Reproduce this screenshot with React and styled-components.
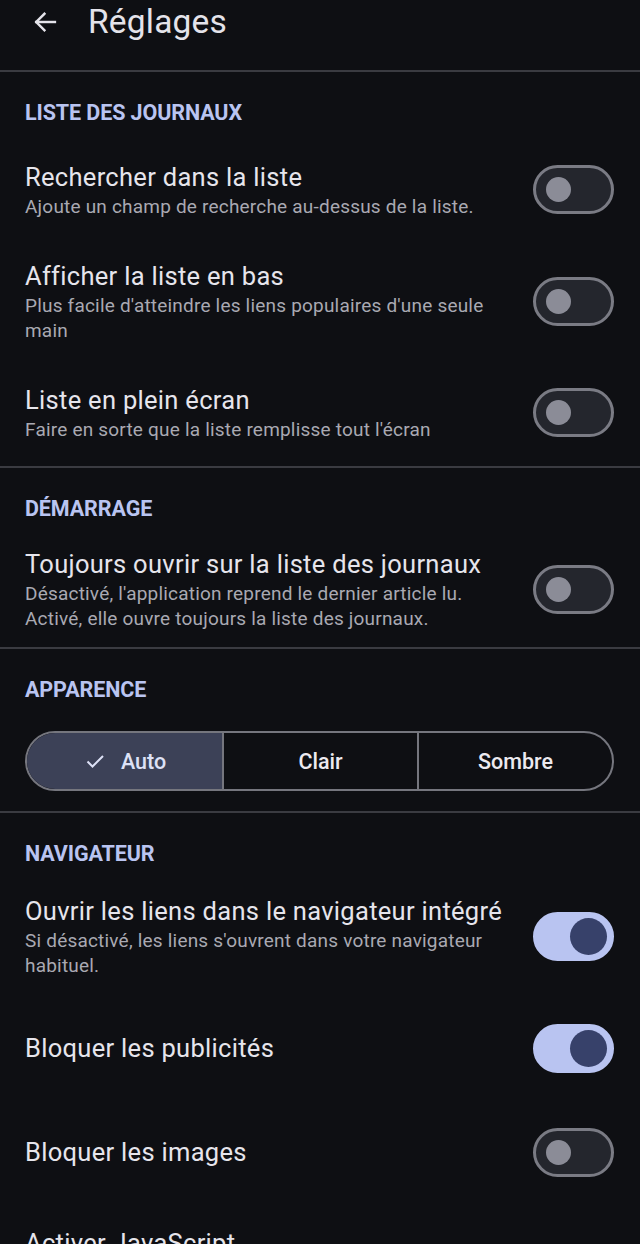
import React, { useState } from 'react';
import styled, { createGlobalStyle } from 'styled-components';

const GlobalStyle = createGlobalStyle`
  html, body {
    margin: 0;
    padding: 0;
    background: #0e0f13;
  }
  * {
    box-sizing: border-box;
  }
`;

const Page = styled.div`
  width: 640px;
  height: 1244px;
  overflow: hidden;
  background: #0e0f13;
  font-family: Roboto, 'Noto Sans', sans-serif;
  color: #e4e3ea;
`;

const TopBar = styled.header`
  display: flex;
  align-items: center;
  gap: 28px;
  height: 72px;
  padding: 0 0 27px 30px;
  border-bottom: 2px solid #3a3b41;
`;

const BackButton = styled.button`
  display: flex;
  align-items: center;
  justify-content: center;
  padding: 0;
  width: 30px;
  height: 30px;
  border: 0;
  background: transparent;
  color: #e4e3ea;
`;

const Title = styled.h1`
  margin: 0;
  font-size: 33.5px;
  font-weight: 400;
  letter-spacing: 0.2px;
`;

const Section = styled.section`
  border-bottom: ${p => (p.last ? '0' : '2px solid #3a3b41')};
  padding-bottom: ${p => p.pad || 0}px;
`;

const SectionHeader = styled.h2`
  margin: 0;
  padding: 29px 25px ${p => p.gap || 6}px;
  font-size: 21.5px;
  line-height: 24px;
  font-weight: 700;
  color: #b9c4f1;
  letter-spacing: -0.1px;
`;

const Row = styled.div`
  display: flex;
  align-items: center;
  gap: 16px;
  min-height: ${p => p.minH || 0}px;
  padding: 20px 26px ${p => p.pb ?? 20}px 25px;
`;

const Texts = styled.div`
  flex: 1;
  align-self: ${p => (p.top ? 'flex-start' : 'auto')};
  display: flex;
  flex-direction: column;
`;

const RowTitle = styled.div`
  font-size: 25.5px;
  line-height: 34px;
  letter-spacing: 0.3px;
  color: #e6e5ec;
`;

const RowSub = styled.div`
  font-size: 19px;
  line-height: 25px;
  letter-spacing: 0.2px;
  color: #a9a9b2;
`;

const Track = styled.button`
  position: relative;
  flex: none;
  width: 81px;
  height: 49px;
  padding: 0;
  border-radius: 25px;
  border: 3px solid ${p => (p.on ? '#b9c4f1' : '#7a7b84')};
  background: ${p => (p.on ? '#b9c4f1' : '#24262d')};
  cursor: pointer;
`;

const Knob = styled.span`
  position: absolute;
  top: 50%;
  left: ${p => (p.on ? '34px' : '10px')};
  width: ${p => (p.on ? '37px' : '25px')};
  height: ${p => (p.on ? '37px' : '25px')};
  margin-top: ${p => (p.on ? '-18.5px' : '-12.5px')};
  border-radius: 50%;
  background: ${p => (p.on ? '#37416a' : '#8b8c97')};
`;

const Segmented = styled.div`
  display: grid;
  grid-template-columns: repeat(3, 1fr);
  margin: 23px 26px 20px 25px;
  height: 60px;
  border: 2px solid #75767e;
  border-radius: 30px;
  overflow: hidden;
`;

const Segment = styled.button`
  display: flex;
  align-items: center;
  justify-content: center;
  gap: 14px;
  padding: 0;
  border: 0;
  border-left: ${p => (p.first ? '0' : '2px solid #75767e')};
  background: ${p => (p.selected ? '#3c4157' : 'transparent')};
  color: ${p => (p.selected ? '#dde1f6' : '#eceaf0')};
  font-family: Roboto, 'Noto Sans', sans-serif;
  font-size: 21.5px;
  font-weight: 500;
  cursor: pointer;
`;

function Toggle({ on, onChange }) {
  return (
    <Track on={on ? 1 : 0} onClick={onChange}>
      <Knob on={on ? 1 : 0} />
    </Track>
  );
}

function SettingRow({ title, sub, on, onChange, minH, top, pb }) {
  return (
    <Row minH={minH} pb={pb}>
      <Texts top={top ? 1 : 0}>
        <RowTitle>{title}</RowTitle>
        {sub && <RowSub>{sub}</RowSub>}
      </Texts>
      <Toggle on={on} onChange={onChange} />
    </Row>
  );
}

export default function App() {
  const [flags, setFlags] = useState({
    search: false,
    bottom: false,
    full: false,
    start: false,
    inapp: true,
    ads: true,
    images: false,
    js: true,
  });
  const [theme, setTheme] = useState('auto');
  const flip = k => () => setFlags(f => ({ ...f, [k]: !f[k] }));

  return (
    <Page>
      <GlobalStyle />
      <TopBar>
        <BackButton aria-label="Retour">
          <svg width="28" height="28" viewBox="0 0 24 24" fill="none" stroke="currentColor" strokeWidth="2.1" strokeLinecap="square">
            <path d="M20.5 12H4.5" />
            <path d="M11.5 5l-7 7 7 7" />
          </svg>
        </BackButton>
        <Title>Réglages</Title>
      </TopBar>

      <Section pad={4}>
        <SectionHeader gap={15}>LISTE DES JOURNAUX</SectionHeader>
        <SettingRow
          title="Rechercher dans la liste"
          sub="Ajoute un champ de recherche au-dessus de la liste."
          on={flags.search}
          onChange={flip('search')}
        />
        <SettingRow
          title="Afficher la liste en bas"
          sub="Plus facile d'atteindre les liens populaires d'une seule main"
          on={flags.bottom}
          onChange={flip('bottom')}
        />
        <SettingRow
          title="Liste en plein écran"
          sub="Faire en sorte que la liste remplisse tout l'écran"
          on={flags.full}
          onChange={flip('full')}
        />
      </Section>

      <Section>
        <SectionHeader gap={6}>DÉMARRAGE</SectionHeader>
        <SettingRow
          title="Toujours ouvrir sur la liste des journaux"
          sub={"Désactivé, l'application reprend le dernier article lu. Activé, elle ouvre toujours la liste des journaux."}
          on={flags.start}
          onChange={flip('start')}
          pb={16}
        />
      </Section>

      <Section>
        <SectionHeader>APPARENCE</SectionHeader>
        <Segmented>
          {[
            ['auto', 'Auto'],
            ['light', 'Clair'],
            ['dark', 'Sombre'],
          ].map(([key, label], i) => (
            <Segment
              key={key}
              first={i === 0 ? 1 : 0}
              selected={theme === key ? 1 : 0}
              onClick={() => setTheme(key)}
            >
              {theme === key && (
                <svg width="24" height="24" viewBox="0 0 24 24" fill="none" stroke="currentColor" strokeWidth="2">
                  <path d="M4.5 12.5l5 5L20 7" />
                </svg>
              )}
              {label}
            </Segment>
          ))}
        </Segmented>
      </Section>

      <Section last>
        <SectionHeader gap={8}>NAVIGATEUR</SectionHeader>
        <SettingRow
          title="Ouvrir les liens dans le navigateur intégré"
          sub="Si désactivé, les liens s'ouvrent dans votre navigateur habituel."
          on={flags.inapp}
          onChange={flip('inapp')}
        />
        <SettingRow title="Bloquer les publicités" on={flags.ads} onChange={flip('ads')} minH={100} />
        <SettingRow title="Bloquer les images" on={flags.images} onChange={flip('images')} minH={108} />
        <SettingRow title="Activer JavaScript" on={flags.js} onChange={flip('js')} minH={124} top />
      </Section>
    </Page>
  );
}
